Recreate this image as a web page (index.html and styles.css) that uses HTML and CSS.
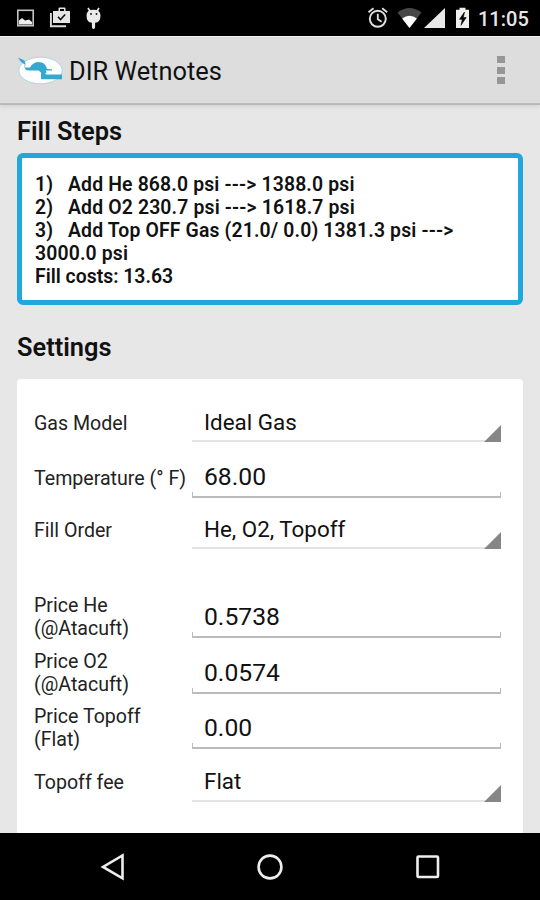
FILE: index.html
```html
<!DOCTYPE html>
<html lang="en">
<head>
<meta charset="utf-8">
<meta name="viewport" content="width=device-width, initial-scale=1.0">
<title>DIR Wetnotes</title>
<link rel="stylesheet" href="styles.css">
</head>
<body>

<div class="status_bar">
    <svg class="notifications" width="90" height="36" viewBox="0 0 90 36">
        <rect x="2.8" y="10.3" width="15.4" height="15.4" fill="none" stroke="#c4c4c4" stroke-width="1.6"/>
        <path d="M4 24.500v-4l3-2.500 3 2.500 4-1 3 2.500v2.500z" fill="#eee"/>
        <path d="M35.900 13v13.200H51" fill="none" stroke="#ddd" stroke-width="1.900"/>
        <path d="M38 11h5.500V8.500q0-1 1-1h5q1 0 1 1V11H55v12H38zM45 11h4V9h-4z" fill="#e6e6e6" fill-rule="evenodd"/>
        <path d="M43 16.800l2.500 2.700 4.700-5" fill="none" stroke="#111" stroke-width="1.600"/>
        <path d="M73 8l2.500 4M84 8l-2.500 4" stroke="#e6e6e6" stroke-width="1.700"/>
        <path d="M71.500 15.500q0-5.700 7-5.700t7 5.700q0 6.800-5.400 7.300V27q0 2-1.600 2t-1.600-2v-4.200q-5.400-.5-5.400-7.300z" fill="#eaeaea"/>
        <circle cx="76" cy="14" r=".9" fill="#111"/>
        <circle cx="81.500" cy="14" r=".9" fill="#111"/>
    </svg>
    <svg class="system_icons" width="110" height="36" viewBox="0 0 110 36">
        <circle cx="18.800" cy="18.800" r="8" fill="none" stroke="#e0e0e0" stroke-width="1.900"/>
        <path d="M18.800 13.800v5.500l3.800 2.400M9.500 12.300l5-4M28.200 12.300l-5-4" fill="none" stroke="#e0e0e0" stroke-width="1.800"/>
        <path d="M38.500 12.500Q50.500 3.500 62.500 12.500L50.500 28z" fill="#484848"/>
        <path d="M43.100 18.500q7.400-5.500 14.800 0L50.500 28z" fill="#fff"/>
        <path d="M86 8v20H65z" fill="#e8e8e8"/>
        <path d="M97 9.700h3.500V7.700h6v2h4V28H97z" fill="#eee"/>
        <path d="M105.500 12l-5 7.300h2.800l-1.300 6 5.200-7.800h-2.900z" fill="#000" stroke="#000" stroke-width=".6"/>
    </svg>
    <span class="clock">11:05</span>
</div>

<div class="app_bar">
    <svg class="logo" width="48" height="32" viewBox="0 0 48 32">
        <ellipse cx="23.500" cy="16.500" rx="21.700" ry="13.300" fill="#fff" stroke="#a5d9e6" stroke-width="1"/>
        <path d="M1 3.500l6.500 3 1 3-.5 4h5q3-5.500 8.500-5.500 7 0 8.500 7l5 .3v1.200h-6l.5 2.500h-5l-3-2.500H12q-4 0-4.500-3.500l.3-2.500L4 8z" fill="#36a7ce"/>
        <path d="M24 17.500h2.500l3 3H45v4.700H24z" fill="#36a7ce"/>
    </svg>
    <span class="title">DIR Wetnotes</span>
    <div class="overflow_menu"><i></i><i></i><i></i></div>
</div>

<div class="content">
    <h2>Fill Steps</h2>
    <div class="fill_steps">
        <div class="step"><span class="num">1)</span>Add He 868.0 psi ---&gt; 1388.0 psi</div>
        <div class="step"><span class="num">2)</span>Add O2 230.7 psi ---&gt; 1618.7 psi</div>
        <div class="step"><span class="num">3)</span>Add Top OFF Gas (21.0/ 0.0) 1381.3 psi ---&gt;<br>3000.0 psi</div>
        <div>Fill costs: 13.63</div>
    </div>

    <h2 class="settings_title">Settings</h2>
    <div class="settings">
        <div class="row">
            <label>Gas Model</label>
            <div class="spinner">Ideal Gas</div>
        </div>
        <div class="row temperature">
            <label>Temperature (° F)</label>
            <div class="field">68.00</div>
        </div>
        <div class="row">
            <label>Fill Order</label>
            <div class="spinner">He, O2, Topoff</div>
        </div>
        <div class="row price first">
            <label>Price He<br>(@Atacuft)</label>
            <div class="field">0.5738</div>
        </div>
        <div class="row price">
            <label>Price O2<br>(@Atacuft)</label>
            <div class="field">0.0574</div>
        </div>
        <div class="row price">
            <label>Price Topoff<br>(Flat)</label>
            <div class="field">0.00</div>
        </div>
        <div class="row fee">
            <label>Topoff fee</label>
            <div class="spinner">Flat</div>
        </div>
    </div>
</div>

<div class="nav_bar">
    <svg width="28" height="28" viewBox="0 0 28 28"><path d="M23.500 2.500v22.800L4 13.900z"/></svg>
    <svg width="28" height="28" viewBox="0 0 28 28"><circle cx="14" cy="14" r="11.400"/></svg>
    <svg width="28" height="28" viewBox="0 0 28 28"><rect x="3.500" y="3.500" width="20.500" height="20.500" rx="1"/></svg>
</div>

</body>
</html>
```

FILE: styles.css
```css
*,*:after,*:before{
  box-sizing: border-box;
}
body{
  font-family: Roboto, "Liberation Sans", sans-serif;
  margin: 0;
  height: 900px;
  display: flex;
  flex-direction: column;
  overflow: hidden;
  background: #e7e7e7;
  color: #111;
}

.status_bar{
  height: 36px;
  flex: none;
  display: flex;
  align-items: center;
  padding: 0 11px 0 15px;
  background: #000;
}
.system_icons{
  margin-left: auto;
}
.clock{
  width: 51px;
  margin-left: 9px;
  padding-top: 2px;
  color: #e6e6e6;
  font-size: 20px;
  font-weight: 500;
  white-space: nowrap;
}

.app_bar{
  height: 69px;
  flex: none;
  display: flex;
  align-items: center;
  padding: 0 35px 0 17px;
  background: #ddd;
  border-top: 1px solid #f2f2f2;
  border-bottom: 2px solid #b9b9b9;
  box-shadow: 0 1px 5px rgba(0,0,0,.12);
}
.title{
  margin-left: 4px;
  padding-top: 1px;
  font-size: 25.400px;
}
.overflow_menu{
  margin-left: auto;
  display: flex;
  flex-direction: column;
  gap: 3.500px;
}
.overflow_menu i{
  width: 8px;
  height: 7px;
  background: #969696;
}

.content{
  flex: 1;
  min-height: 0;
  display: flex;
  flex-direction: column;
  padding: 11px 17px 0;
}
h2{
  margin: 0;
  font-size: 25.400px;
  font-weight: 600;
  line-height: 30px;
}
.fill_steps{
  height: 152px;
  margin-top: 7px;
  padding: 15px 13px;
  background: #fff;
  border: 5px solid #20a7db;
  border-radius: 6px;
  font-size: 19.400px;
  font-weight: 600;
  line-height: 23px;
}
.step{
  letter-spacing: .15px;
}
.num{
  display: inline-block;
  width: 33px;
}
.settings_title{
  margin-top: 27px;
}

.settings{
  flex: 1;
  margin-top: 17px;
  padding: 21px 22px 0 17px;
  background: #fff;
  border-radius: 4px 4px 0 0;
}
.row{
  display: flex;
  align-items: center;
  margin-top: 9px;
}
.row:first-child{
  margin-top: 0;
}
.row.temperature{
  margin-top: 14px;
}
.row.price{
  height: 46px;
  margin-top: 9.500px;
}
.row.first{
  margin-top: 45px;
}
label{
  width: 158px;
  flex: none;
  padding-top: 4px;
  font-size: 19.600px;
  line-height: 23px;
  white-space: nowrap;
  color: #222;
}
.temperature label{
  padding-top: 3px;
}
.price label{
  padding-top: 0;
}
.fee label{
  padding-top: 2px;
}
.spinner, .field{
  position: relative;
  flex: 1;
  height: 42px;
  padding-left: 12px;
  font-size: 24.700px;
  line-height: 42px;
}
.spinner{
  font-size: 22.400px;
  line-height: 44px;
  border-bottom: 2px solid #e4e4e4;
}
.fee .spinner{
  line-height: 42px;
}
/* corner triangle of the drop-down */
.spinner:after{
  content: "";
  position: absolute;
  right: 0;
  bottom: -2px;
  border-left: 17px solid transparent;
  border-bottom: 17px solid #868686;
}
/* underline with small upturned ends */
.field:after{
  content: "";
  position: absolute;
  left: 0;
  right: 0;
  bottom: 0;
  height: 6px;
  border: 1px solid #bbb;
  border-bottom-width: 2px;
  border-top: 0;
}

.nav_bar{
  height: 67px;
  flex: none;
  display: flex;
  align-items: center;
  justify-content: center;
  gap: 129.500px;
  background: #000;
}
.nav_bar svg{
  fill: none;
  stroke: #eee;
  stroke-width: 2.600;
}
```
